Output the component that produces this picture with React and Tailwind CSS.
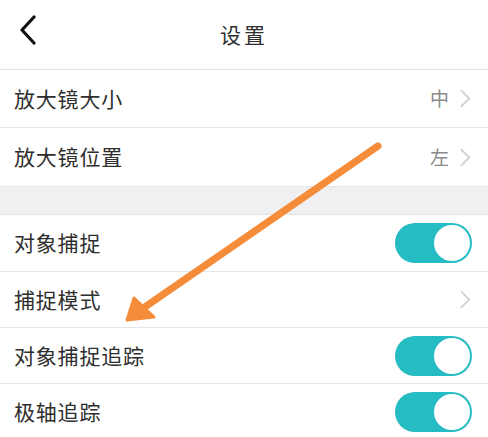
import React from 'react';

const font = { fontFamily: '"Noto Sans CJK SC", "Noto Sans", sans-serif' };

function Chevron() {
  return (
    <svg viewBox="0 0 14 22" className="h-[21px] w-[13px]" fill="none" stroke="#d2d2d2" strokeWidth="2">
      <path d="M2 2l9 9-9 9" />
    </svg>
  );
}

function Toggle() {
  return (
    <div className="flex h-[40px] w-[77px] items-center justify-end rounded-full bg-[#26bcc4] p-[2px]">
      <div className="h-[36px] w-[36px] rounded-full bg-white" />
    </div>
  );
}

function Row({ label, value, chevron, toggle, h = 'h-[57px]' }) {
  return (
    <div className={`${h} flex items-center justify-between border-b border-[#e6e6e6] bg-white pl-[14px] pr-[16px]`}>
      <span className="text-[21px] tracking-[0.8px] text-[#2e2e2e]">{label}</span>
      <div className="flex items-center gap-[10px]">
        {value && <span className="text-[19px] text-[#8a8a8a]">{value}</span>}
        {chevron && <Chevron />}
        {toggle && <Toggle />}
      </div>
    </div>
  );
}

export default function App() {
  return (
    <div className="relative h-[437px] w-[488px] overflow-hidden bg-white" style={font}>
      <header className="relative flex h-[70px] items-center justify-center border-b border-[#e3e3e3]">
        <svg viewBox="0 0 20 30" className="absolute left-[18px] top-[15px] h-[30px] w-[20px]" fill="none" stroke="#111" strokeWidth="3.2" strokeLinecap="round" strokeLinejoin="round">
          <path d="M16 2L4 15l12 13" />
        </svg>
        <h1 className="text-[21px] tracking-[3px] text-[#2e2e2e]">设置</h1>
      </header>

      <Row label="放大镜大小" value="中" chevron h="h-[58px]" />
      <Row label="放大镜位置" value="左" chevron h="h-[59px]" />
      <div className="h-[28px] border-b border-[#e3e3e3] bg-[#f0f0f2]" />
      <Row label="对象捕捉" toggle />
      <Row label="捕捉模式" chevron h="h-[56px]" />
      <Row label="对象捕捉追踪" toggle h="h-[56px]" />
      <Row label="极轴追踪" toggle h="h-[56px]" />

      <svg className="pointer-events-none absolute left-0 top-0" width="488" height="437" viewBox="0 0 488 437">
        <line x1="378" y1="146" x2="142" y2="309" stroke="#f48c3a" strokeWidth="7" strokeLinecap="round" />
        <polygon points="127,320 134,298 154,317" fill="#f48c3a" stroke="#f48c3a" strokeWidth="3" strokeLinejoin="round" />
      </svg>
    </div>
  );
}
